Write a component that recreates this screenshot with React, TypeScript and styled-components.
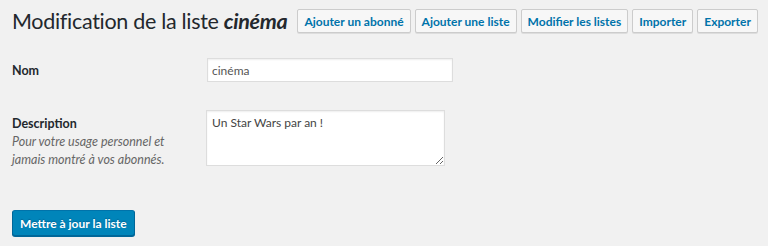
import React from "react";
import styled, { createGlobalStyle } from "styled-components";

const Global = createGlobalStyle`
  html, body { margin: 0; padding: 0; background: #f1f1f1; }
  body { font-family: Lato, "Open Sans", sans-serif; color: #23282d; }
  * { box-sizing: border-box; }
`;

const Wrap = styled.div`
  padding: 9px 12px 0 12px;
  width: 768px;
  height: 246px;
  overflow: hidden;
`;

const Header = styled.div`
  display: flex;
  align-items: center;
  gap: 4px;
`;

const Title = styled.h1`
  margin: 0 6px 0 0;
  font-size: 21.5px;
  letter-spacing: -0.3px;
  font-weight: 400;
  line-height: 24px;
  color: #23282d;
  white-space: nowrap;
  em { font-weight: 700; }
`;

const ActionButton = styled.button`
  height: 24px;
  padding: 0 6px;
  border: 1px solid #ccc;
  border-radius: 2px;
  background: #f7f7f7;
  color: #0073aa;
  font-family: inherit;
  font-size: 12px;
  font-weight: 700;
  white-space: nowrap;
  box-shadow: 0 1px 0 #ddd;
`;

const Form = styled.form`
  margin-top: 25px;
  display: flex;
  flex-direction: column;
`;

const Row = styled.div<{ $top: number }>`
  display: grid;
  grid-template-columns: 195px 1fr;
  align-items: start;
  margin-top: ${(p) => p.$top}px;
`;

const Label = styled.label<{ $pad: number }>`
  font-size: 12.5px;
  font-weight: 700;
  padding-top: ${(p) => p.$pad}px;
  line-height: 18px;
`;

const Help = styled.span`
  display: block;
  font-size: 12.5px;
  font-weight: 400;
  font-style: italic;
  color: #666;
  line-height: 18px;
  margin-top: 0;
  width: 165px;
`;

const Input = styled.input`
  width: 246px;
  height: 24px;
  padding: 0 4px;
  border: 1px solid #ddd;
  box-shadow: inset 0 1px 2px rgba(0, 0, 0, 0.07);
  background: #fff;
  font-family: inherit;
  font-size: 12px;
  color: #555;
  outline: none;
`;

const TextArea = styled.textarea`
  width: 239px;
  height: 56px;
  margin-left: -1px;
  padding: 3px 5px;
  border: 1px solid #ddd;
  box-shadow: inset 0 1px 2px rgba(0, 0, 0, 0.07);
  background: #fff;
  font-family: inherit;
  font-size: 12px;
  line-height: 18px;
  color: #444;
  outline: none;
  resize: vertical;
  display: block;
`;

const Submit = styled.button`
  align-self: flex-start;
  margin-top: 41px;
  height: 26px;
  padding: 0 7px;
  background: #0085ba;
  border: 1px solid;
  border-color: #0073aa #006799 #006799;
  border-radius: 3px;
  box-shadow: 0 1px 0 #006799;
  color: #fff;
  font-family: inherit;
  font-size: 12px;
  font-weight: 700;
  text-shadow: 0 -1px 1px #006799;
`;

export default function App() {
  return (
    <>
      <Global />
      <Wrap>
        <Header>
          <Title>
            Modification de la liste <em>cinéma</em>
          </Title>
          <ActionButton>Ajouter un abonné</ActionButton>
          <ActionButton>Ajouter une liste</ActionButton>
          <ActionButton>Modifier les listes</ActionButton>
          <ActionButton>Importer</ActionButton>
          <ActionButton>Exporter</ActionButton>
        </Header>
        <Form onSubmit={(e) => e.preventDefault()}>
          <Row $top={0}>
            <Label $pad={4} htmlFor="nom">Nom</Label>
            <Input id="nom" defaultValue="cinéma" />
          </Row>
          <Row $top={28}>
            <Label $pad={5} htmlFor="desc">
              Description
              <Help>Pour votre usage personnel et jamais montré à vos abonnés.</Help>
            </Label>
            <TextArea id="desc" defaultValue="Un Star Wars par an !" />
          </Row>
          <Submit type="submit">Mettre à jour la liste</Submit>
        </Form>
      </Wrap>
    </>
  );
}
